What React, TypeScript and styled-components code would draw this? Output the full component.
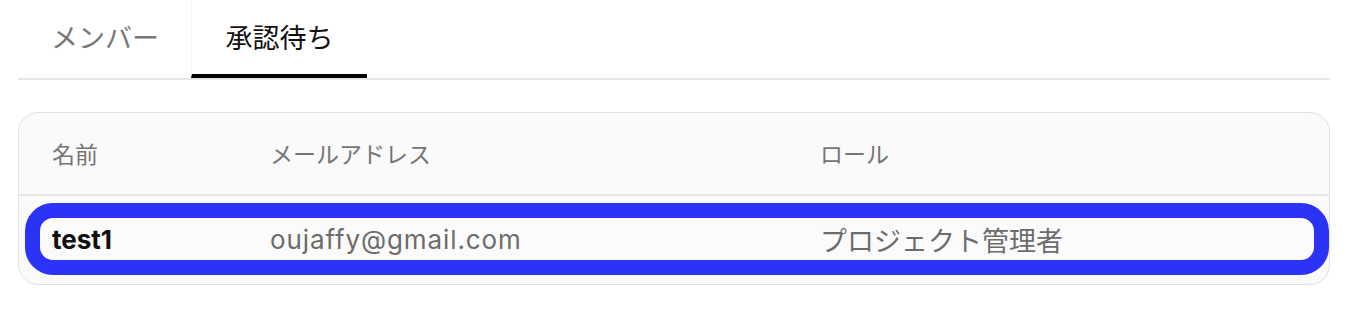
import React from "react";
import styled, { createGlobalStyle } from "styled-components";

const GlobalStyle = createGlobalStyle`
  body {
    margin: 0;
    background: #fff;
    font-family: "Inter", "Noto Sans CJK JP", sans-serif;
  }
`;

interface Member {
  name: string;
  email: string;
  role: string;
}

const pending: Member[] = [
  { name: "test1", email: "oujaffy@gmail.com", role: "プロジェクト管理者" },
];

const tabs = ["メンバー", "承認待ち"];

const App = () => {
  return (
    <Page>
      <GlobalStyle />
      <TabBar>
        {tabs.map((tab, index) => (
          <Tab key={`tab-${index}`} active={index === 1}>
            {tab}
          </Tab>
        ))}
      </TabBar>

      <Card>
        <HeaderRow>
          <HeaderCell>名前</HeaderCell>
          <HeaderCell>メールアドレス</HeaderCell>
          <HeaderCell>ロール</HeaderCell>
        </HeaderRow>

        <Body>
          {pending.map((member, index) => (
            <Highlight key={`member-${index}`}>
              <NameCell>{member.name}</NameCell>
              <EmailCell>{member.email}</EmailCell>
              <Cell>{member.role}</Cell>
            </Highlight>
          ))}
        </Body>
      </Card>
    </Page>
  );
};

export default App;

const Page = styled.div`
  padding: 0 34px 0 18px;
`;

const TabBar = styled.div`
  display: flex;
  height: 78px;
  border-bottom: 2px solid #e6e6e6;
`;

const Tab = styled.div<{ active?: boolean }>`
  display: flex;
  align-items: center;
  justify-content: center;
  width: ${({ active }) => (active ? "176px" : "173px")};
  height: 78px;
  box-sizing: border-box;
  padding-bottom: 2px;
  font-family: "Noto Sans CJK JP", sans-serif;
  font-size: 27px;
  color: ${({ active }) => (active ? "#111" : "#777")};
  border-bottom: 4px solid ${({ active }) => (active ? "#000" : "transparent")};
  border-left: 1px solid ${({ active }) => (active ? "#f4f4f4" : "transparent")};
  margin-bottom: -1px;
`;

const Card = styled.div`
  margin-top: 32px;
  border: 1px solid #e2e2e2;
  border-radius: 20px;
  background: #fafafa;
`;

const HeaderRow = styled.div`
  display: grid;
  grid-template-columns: 218px 550px 1fr;
  align-items: center;
  height: 81px;
  padding-left: 33px;
  border-bottom: 2px solid #e6e6e6;
`;

const HeaderCell = styled.div`
  font-family: "Noto Sans CJK JP", sans-serif;
  font-size: 23px;
  color: #757575;
  margin-top: -2px;
`;

const Body = styled.div`
  padding: 7px 0 9px 6px;
`;

const Highlight = styled.div`
  display: grid;
  grid-template-columns: 218px 550px 1fr;
  align-items: center;
  height: 72px;
  box-sizing: border-box;
  padding-left: 12px;
  border: 15px solid #2b33f7;
  border-radius: 28px;
  background: #fbfbfb;
`;

const Cell = styled.div`
  font-size: 27px;
  color: #6c6c6c;
  white-space: nowrap;
`;

const EmailCell = styled(Cell)`
  font-size: 26px;
  letter-spacing: 0.9px;
`;

const NameCell = styled(Cell)`
  font-size: 26px;
  font-weight: 700;
  color: #111;
`;
